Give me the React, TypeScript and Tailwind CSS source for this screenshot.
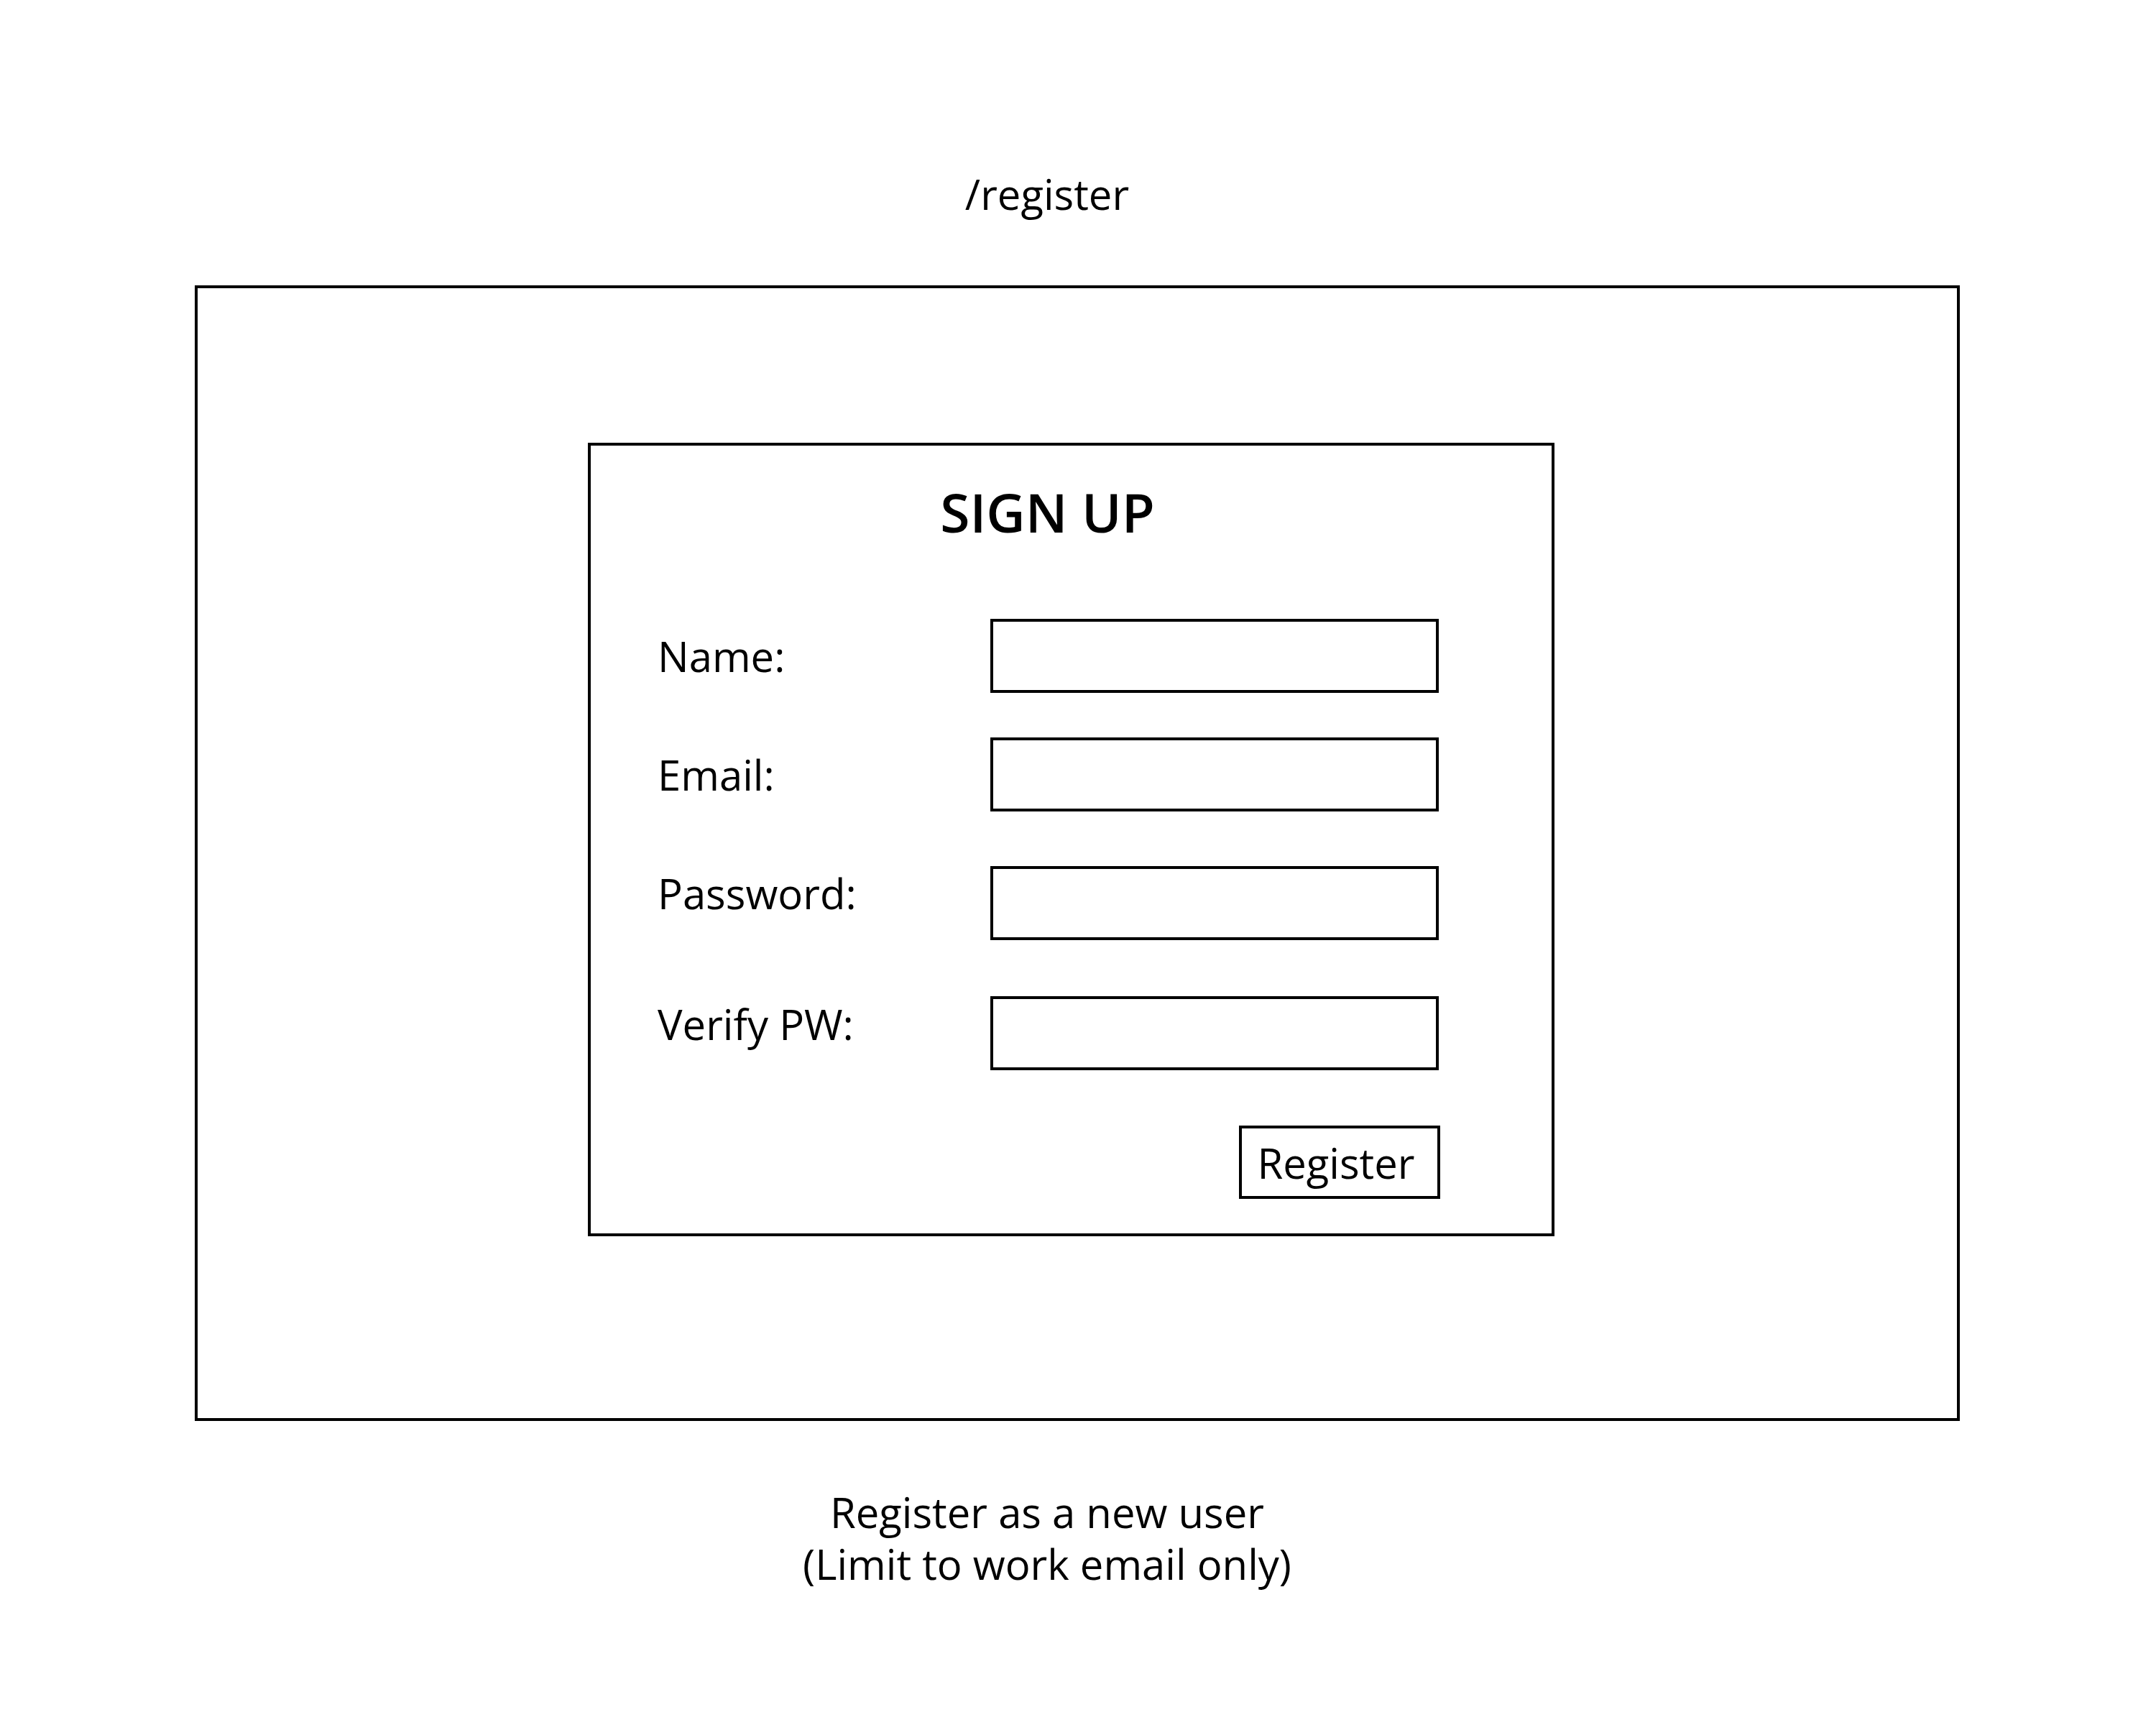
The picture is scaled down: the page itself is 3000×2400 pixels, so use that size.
const rows = [
  { label: 'Name:', gap: 'mt-[98px]', lift: '' },
  { label: 'Email:', gap: 'mt-[62px]', lift: '' },
  { label: 'Password:', gap: 'mt-[74px]', lift: 'pb-[28px]' },
  { label: 'Verify PW:', gap: 'mt-[75px]', lift: 'pb-[26px]' },
];

export default function App() {
  return (
    <div className="w-[3000px] h-[2400px] bg-white text-black font-['Open_Sans',sans-serif] pt-[230px]">
      <div className="w-[2914px] text-center text-[58px] leading-[79px]">/register</div>

      <div className="mt-[88px] ml-[271px] w-[2456px] h-[1580px] border-4 border-black">
        <div className="mt-[215px] ml-[543px] w-[1345px] h-[1104px] border-4 border-black pt-[41px]">
          <h1 className="pr-[66px] text-center text-[75px] leading-[102px] font-semibold">SIGN UP</h1>

          {rows.map((row) => (
            <div key={row.label} className={`${row.gap} flex items-center pl-[93px]`}>
              <div className={`w-[463px] text-[58px] leading-[79px] ${row.lift}`}>{row.label}</div>
              <div className="w-[624px] h-[103px] border-4 border-black" />
            </div>
          ))}

          <div className="mt-[76px] ml-[902px] w-[280px] h-[102px] border-4 border-black flex items-center justify-center pr-[10px] text-[58px] leading-[79px]">
            Register
          </div>
        </div>
      </div>

      <div className="mt-[91px] w-[2914px] text-center text-[58px] leading-[72px]">
        <div>Register as a new user</div>
        <div>(Limit to work email only)</div>
      </div>
    </div>
  );
}
